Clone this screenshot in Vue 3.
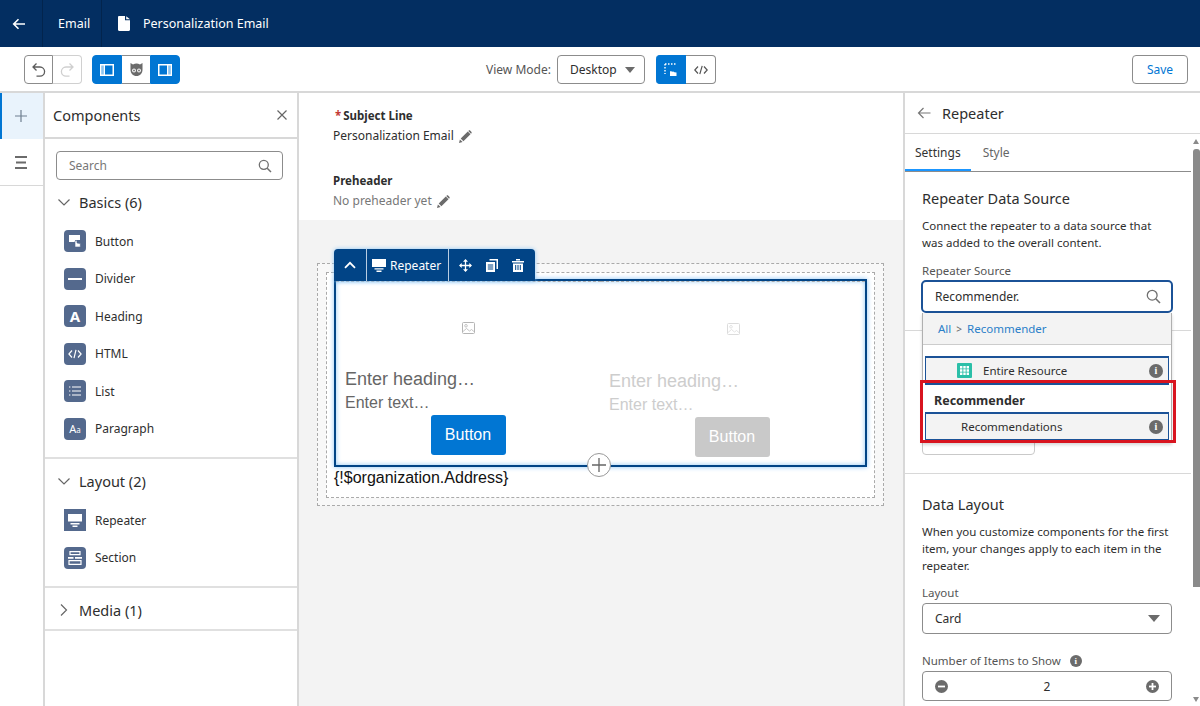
<script setup>
const basics = [
  { name: 'Button', kind: 'button' },
  { name: 'Divider', kind: 'divider' },
  { name: 'Heading', kind: 'heading' },
  { name: 'HTML', kind: 'html' },
  { name: 'List', kind: 'list' },
  { name: 'Paragraph', kind: 'paragraph' }
]
const layouts = [
  { name: 'Repeater', kind: 'repeater' },
  { name: 'Section', kind: 'section' }
]
const cells = [
  { id: 1, muted: false },
  { id: 2, muted: true }
]
</script>

<template>
  <div class="page">
    <header class="topbar">
      <div class="top-back">
        <svg width="16" height="16" viewBox="0 0 16 16"><path d="M14 8H3M7.5 3.2 2.7 8l4.8 4.8" fill="none" stroke="#fff" stroke-width="1.6"/></svg>
      </div>
      <div class="top-email">Email</div>
      <div class="top-title">
        <svg width="12" height="15" viewBox="0 0 12 15"><path d="M1.2 0H7v4.2h5v9.6c0 .7-.5 1.2-1.2 1.2H1.2C.5 15 0 14.5 0 13.8V1.2C0 .5.5 0 1.2 0ZM8.2.2 12 3.2H8.2Z" fill="#fff"/></svg>
        <span>Personalization Email</span>
      </div>
    </header>

    <div class="toolbar">
      <div class="btn-group undo">
        <button class="tool">
          <svg width="16" height="16" viewBox="0 0 16 16"><path d="M5.5 1.5 2 5l3.5 3.5M2.4 5H9a4.6 4.6 0 0 1 0 9.2H5.5" fill="none" stroke="#5c5c5c" stroke-width="1.3"/></svg>
        </button>
        <button class="tool off">
          <svg width="16" height="16" viewBox="0 0 16 16"><path d="M10.5 1.5 14 5l-3.5 3.5M13.6 5H7a4.6 4.6 0 0 0 0 9.2h3.5" fill="none" stroke="#cfcfcf" stroke-width="1.3"/></svg>
        </button>
      </div>
      <div class="btn-group panels">
        <button class="tool on">
          <svg width="14" height="12" viewBox="0 0 14 12"><path d="M0 0h14v12H0Z" fill="#fff"/><path d="M5 1.5h7.5v9H5Z" fill="#0176d3"/><path d="M1.2 1.5h2.6v9H1.2Z" fill="#8ec4ee"/></svg>
        </button>
        <button class="tool mid">
          <svg width="15" height="15" viewBox="0 0 15 15"><path d="M1.5 1 4 2.6a7 7 0 0 1 7 0L13.500 1v6.500C13.500 11.500 11 14 7.500 14S1.500 11.500 1.500 7.500Z" fill="#6b6b6b"/><circle cx="5" cy="8.500" r="1.900" fill="#fff"/><circle cx="10" cy="8.500" r="1.900" fill="#fff"/><circle cx="5" cy="8.500" r=".9" fill="#6b6b6b"/><circle cx="10" cy="8.500" r=".9" fill="#6b6b6b"/></svg>
        </button>
        <button class="tool on">
          <svg width="14" height="12" viewBox="0 0 14 12"><path d="M0 0h14v12H0Z" fill="#fff"/><path d="M1.500 1.500H9v9H1.500Z" fill="#0176d3"/><path d="M10.200 1.500h2.600v9h-2.600Z" fill="#8ec4ee"/></svg>
        </button>
      </div>
      <div class="view-mode">
        <span class="view-label">View Mode:</span>
        <div class="view-select">
          <span>Desktop</span>
          <i class="caret"></i>
        </div>
        <div class="btn-group editors">
          <button class="tool on">
            <svg width="14" height="14" viewBox="0 0 14 14"><path d="M1 1h12M1 1v10" fill="none" stroke="#fff" stroke-width="1.400" stroke-dasharray="1.500 1.500"/><path d="M6 13V8.500l1-.5 1 .8 1.200-.3 1.300.7 2 .3V13Z" fill="#fff"/></svg>
          </button>
          <button class="tool">
            <svg width="14" height="10" viewBox="0 0 14 10"><path d="M4 1.500.8 5 4 8.500M10 1.500 13.200 5 10 8.500M8.200.8 5.800 9.200" fill="none" stroke="#555" stroke-width="1.200"/></svg>
          </button>
        </div>
      </div>
      <button class="save">Save</button>
    </div>

    <main class="workspace">
      <nav class="rail">
        <div class="rail-item active">
          <svg width="14" height="14" viewBox="0 0 14 14"><path d="M7 1v12M1 7h12" stroke="#6f7f8f" stroke-width="1.200"/></svg>
        </div>
        <div class="rail-item">
          <svg width="12" height="13" viewBox="0 0 12 13"><path d="M0 1h12M1 6.500h10M0 12h12" stroke="#6b6b6b" stroke-width="2"/></svg>
        </div>
      </nav>

      <aside class="components">
        <div class="comp-head">
          <span>Components</span>
          <svg width="12" height="12" viewBox="0 0 12 12"><path d="M1.500 1.500l9 9M10.500 1.500l-9 9" stroke="#666" stroke-width="1.200"/></svg>
        </div>
        <div class="comp-search">
          <div class="search-box">
            <span>Search</span>
            <svg width="14" height="14" viewBox="0 0 14 14"><circle cx="5.800" cy="5.800" r="4.500" fill="none" stroke="#707070" stroke-width="1.300"/><path d="M9.200 9.200 13 13" stroke="#707070" stroke-width="1.500"/></svg>
          </div>
        </div>

        <section class="group basics">
          <div class="group-head">
            <svg width="14" height="14" viewBox="0 0 14 14"><path d="M1.500 4.500 7 10l5.500-5.500" fill="none" stroke="#666" stroke-width="1.200"/></svg>
            <span>Basics (6)</span>
          </div>
          <div v-for="item in basics" :key="item.name" class="comp-item">
            <div class="comp-icon">
              <svg v-if="item.kind === 'button'" width="14" height="14" viewBox="0 0 14 14"><path d="M1 1h11v5H7v2H1Z" fill="#fff"/><path d="M7 13V7.500c0-1.200 2-1.200 2 0V9l3.300.6V13Z" fill="#fff" stroke="#54698d" stroke-width=".6"/></svg>
              <svg v-else-if="item.kind === 'divider'" width="14" height="4" viewBox="0 0 14 4"><path d="M0 1h14v2H0Z" fill="#fff"/></svg>
              <span v-else-if="item.kind === 'heading'" class="glyph-a">A</span>
              <svg v-else-if="item.kind === 'html'" width="14" height="10" viewBox="0 0 14 10"><path d="M4 1.500.9 5 4 8.500M10 1.500 13.100 5 10 8.500M8 .8 6 9.200" fill="none" stroke="#fff" stroke-width="1.200"/></svg>
              <svg v-else-if="item.kind === 'list'" width="12" height="10" viewBox="0 0 12 10"><path d="M3 1h9M3 5h9M3 9h9M0 1h1.400M0 5h1.400M0 9h1.400" stroke="#fff" stroke-width="1"/></svg>
              <span v-else class="glyph-aa">A<small>a</small></span>
            </div>
            <span>{{ item.name }}</span>
          </div>
        </section>

        <section class="group layouts">
          <div class="group-head">
            <svg width="14" height="14" viewBox="0 0 14 14"><path d="M1.500 4.500 7 10l5.500-5.500" fill="none" stroke="#666" stroke-width="1.200"/></svg>
            <span>Layout (2)</span>
          </div>
          <div v-for="item in layouts" :key="item.name" class="comp-item">
            <div class="comp-icon" :class="{ square: item.kind === 'repeater' }">
              <svg v-if="item.kind === 'repeater'" width="14" height="13" viewBox="0 0 14 13"><path d="M0 0h14v7.500H0ZM2.500 9h9v1.500h-9ZM4.500 11.500h5V13h-5Z" fill="#fff"/></svg>
              <svg v-else width="14" height="14" viewBox="0 0 14 14"><path d="M2 .7h10v3H2Zm-1 9h12v3.600H1Z" fill="none" stroke="#fff" stroke-width="1.200"/><path d="M0 6h5.500v1.800H0ZM7 6h7v1.800H7Z" fill="#fff"/></svg>
            </div>
            <span>{{ item.name }}</span>
          </div>
        </section>

        <section class="group media">
          <div class="group-head">
            <svg width="14" height="14" viewBox="0 0 14 14"><path d="M4 1.500 9.500 7 4 12.500" fill="none" stroke="#666" stroke-width="1.200"/></svg>
            <span>Media (1)</span>
          </div>
        </section>
      </aside>

      <div class="editor">
        <div class="subject">
          <div class="field-label"><em>*</em>Subject Line</div>
          <div class="field-value">
            Personalization Email
            <svg width="13" height="13" viewBox="0 0 13 13"><path d="M0 13l.9-3.600 2.700 2.700ZM1.700 8.600 8.800 1.500l2.700 2.700-7.100 7.100ZM9.600.7c.5-.5 1.200-.5 1.700 0l1 1c.5.5.5 1.200 0 1.700l-.3.300-2.700-2.700Z" fill="#6b6b6b"/></svg>
          </div>
          <div class="field-label pre">Preheader</div>
          <div class="field-value empty">
            No preheader yet
            <svg width="13" height="13" viewBox="0 0 13 13"><path d="M0 13l.9-3.600 2.700 2.700ZM1.700 8.600 8.800 1.500l2.700 2.700-7.100 7.100ZM9.600.7c.5-.5 1.200-.5 1.700 0l1 1c.5.5.5 1.200 0 1.700l-.3.300-2.700-2.700Z" fill="#6b6b6b"/></svg>
          </div>
        </div>

        <div class="canvas">
          <div class="outer-dash">
            <div class="inner-dash">
              <div class="repeater">
                <div class="rep-bar">
                  <div class="rep-seg collapse">
                    <svg width="12" height="8" viewBox="0 0 12 8"><path d="M1 6.800 6 1.800l5 5" fill="none" stroke="#fff" stroke-width="1.800"/></svg>
                  </div>
                  <div class="rep-seg name">
                    <svg width="14" height="13" viewBox="0 0 14 13"><path d="M0 0h14v8H0ZM2.500 9.300h9v1.300h-9ZM4.500 11.500h5V13h-5Z" fill="#fff"/></svg>
                    <span>Repeater</span>
                  </div>
                  <div class="rep-seg actions">
                    <svg width="13" height="13" viewBox="0 0 13 13"><path d="M6.500 1v11M1 6.500h11" stroke="#fff" stroke-width="1.300"/><path d="M6.500 0 9 2.700H4ZM6.500 13 4 10.300h5ZM0 6.500 2.700 4v5ZM13 6.500 10.300 9V4Z" fill="#fff"/></svg>
                    <svg width="12" height="13" viewBox="0 0 12 13"><path d="M3.500 0H12v10h-1.500V1.500h-7Z" fill="#fff"/><path d="M0 3h9v10H0Z" fill="#fff"/><path d="M1.800 6h5.400M1.800 8h5.400M1.800 10h5.400" stroke="#014486"/></svg>
                    <svg width="12" height="13" viewBox="0 0 12 13"><path d="M0 2h12v1.500H0ZM4 0h4v1.500H4ZM1 4.500h10V13H1Z" fill="#fff"/><path d="M3.700 6v5M6 6v5M8.300 6v5" stroke="#014486"/></svg>
                  </div>
                </div>
                <div v-for="cell in cells" :key="cell.id" class="cell" :class="{ muted: cell.muted }">
                  <div class="cell-image">
                    <svg width="13" height="12" viewBox="0 0 13 12"><rect x=".5" y=".5" width="12" height="11" rx="1" fill="none" stroke="currentColor"/><circle cx="4" cy="3.800" r="1.300" fill="none" stroke="currentColor" stroke-width=".8"/><path d="M1 9.500 4.500 6.500l3 2.500 2-1.500L12.500 10" fill="none" stroke="currentColor" stroke-width=".8"/></svg>
                  </div>
                  <div class="cell-heading">Enter heading…</div>
                  <div class="cell-text">Enter text…</div>
                  <div class="cell-btn">Button</div>
                </div>
                <div class="add-circle">
                  <svg width="14" height="14" viewBox="0 0 14 14"><path d="M7 0v14M0 7h14" stroke="#666" stroke-width="1.300"/></svg>
                </div>
              </div>
              <div class="address">{!$organization.Address}</div>
            </div>
          </div>
        </div>
      </div>

      <aside class="props">
        <div class="props-head">
          <svg width="14" height="14" viewBox="0 0 14 14"><path d="M13.500 7H1.500M6.500 2 1.500 7l5 5" fill="none" stroke="#777" stroke-width="1.200"/></svg>
          <span>Repeater</span>
        </div>
        <div class="props-scroll">
          <div class="props-body">
            <div class="tabs">
              <span class="tab current">Settings</span>
              <span class="tab">Style</span>
            </div>

            <section class="prop-section source">
              <h3>Repeater Data Source</h3>
              <p>Connect the repeater to a data source that was added to the overall content.</p>
              <label>Repeater Source</label>
              <div class="source-field">
                <div class="source-input">
                  <span>Recommender.</span>
                  <svg width="15" height="15" viewBox="0 0 15 15"><circle cx="6.200" cy="6.200" r="4.900" fill="none" stroke="#707070" stroke-width="1.300"/><path d="M9.800 9.800 14 14" stroke="#707070" stroke-width="1.600"/></svg>
                </div>
                <div class="dropdown">
                  <div class="crumbs"><a>All</a><b>&gt;</b><a>Recommender</a></div>
                  <div class="option first">
                    <svg width="15" height="15" viewBox="0 0 15 15"><rect width="15" height="15" rx="1" fill="#2bbfa8"/><path d="M3 3h2.400v2.400H3ZM6.300 3h2.400v2.400H6.300ZM9.600 3H12v2.400H9.600ZM3 6.300h2.400v2.400H3ZM6.300 6.300h2.400v2.400H6.300ZM9.600 6.300H12v2.400H9.600ZM3 9.600h2.400V12H3ZM6.300 9.600h2.400V12H6.300ZM9.600 9.600H12V12H9.600Z" fill="#fff"/></svg>
                    <span>Entire Resource</span>
                    <i class="info">i</i>
                  </div>
                  <div class="option-title">Recommender</div>
                  <div class="option second">
                    <span>Recommendations</span>
                    <i class="info">i</i>
                  </div>
                  <div class="red-box"></div>
                </div>
              </div>
            </section>

            <section class="prop-section hidden-part">
              <div class="under-btn"></div>
            </section>

            <section class="prop-section data-layout">
              <h3>Data Layout</h3>
              <p>When you customize components for the first item, your changes apply to each item in the repeater.</p>
              <label>Layout</label>
              <div class="layout-select">
                <span>Card</span>
                <i class="caret large"></i>
              </div>
              <label class="items-label">Number of Items to Show <i class="info small">i</i></label>
              <div class="stepper">
                <svg width="13" height="13" viewBox="0 0 13 13"><circle cx="6.500" cy="6.500" r="6.500" fill="#6b6b6b"/><path d="M3 5.600h7v1.800H3Z" fill="#fff"/></svg>
                <span>2</span>
                <svg width="13" height="13" viewBox="0 0 13 13"><circle cx="6.500" cy="6.500" r="6.500" fill="#6b6b6b"/><path d="M3 5.600h7v1.800H3Z" fill="#fff"/><path d="M5.600 3h1.800v7H5.600Z" fill="#fff"/></svg>
              </div>
            </section>
          </div>
          <div class="scrollbar">
            <i class="arrow up"></i>
            <div class="thumb"></div>
            <i class="arrow down"></i>
          </div>
        </div>
      </aside>
    </main>
  </div>
</template>

<style>
html, body { margin: 0; background: #fff; }
</style>

<style scoped>
.page {
  width: 1200px;
  height: 706px;
  overflow: hidden;
  display: flex;
  flex-direction: column;
  font-family: "Noto Sans", "Open Sans", sans-serif;
  font-size: 12px;
  color: #2e2e2e;
  background: #fff;
}

/* top bar */
.topbar {
  flex: none;
  height: 47px;
  display: flex;
  background: #032e61;
  color: #fff;
  font-size: 12.5px;
}
.top-back, .top-email, .top-title {
  display: flex;
  align-items: center;
  border-right: 1px solid #02244d;
}
.top-back { width: 43px; justify-content: center; padding-right: 4px; box-sizing: border-box; }
.top-email { width: 59px; padding-left: 15px; box-sizing: border-box; }
.top-title { border-right: 0; padding-left: 16px; gap: 13px; }

/* toolbar */
.toolbar {
  flex: none;
  height: 46px;
  box-sizing: border-box;
  display: flex;
  align-items: flex-start;
  padding: 8px 12px 0 24px;
  border-bottom: 2px solid #d8d8d8;
}
.btn-group { display: flex; height: 29px; }
.tool {
  padding: 0;
  height: 29px;
  display: flex;
  align-items: center;
  justify-content: center;
  background: #fff;
  border: 1px solid #8c8c8c;
  box-sizing: border-box;
}
.undo .tool { width: 29px; }
.undo .tool:first-child { border-radius: 4px 0 0 4px; }
.undo .tool.off { border-color: #d0d0d0; border-left: 0; border-radius: 0 4px 4px 0; }
.panels { margin-left: 10px; }
.panels .tool { width: 30px; }
.tool.on { background: #0176d3; border-color: #0176d3; }
.panels .tool:first-child { border-radius: 4px 0 0 4px; }
.panels .tool:last-child { border-radius: 0 4px 4px 0; }
.tool.mid { width: 28px; border-left: 0; border-right: 0; }
.view-mode { display: flex; align-items: center; height: 29px; margin-left: 306px; }
.view-label { color: #555; width: 71px; }
.view-select {
  width: 88px;
  height: 29px;
  box-sizing: border-box;
  border: 1px solid #8c8c8c;
  border-radius: 4px;
  display: flex;
  align-items: center;
  justify-content: space-between;
  padding: 0 9px 0 12px;
}
.caret {
  width: 0;
  height: 0;
  border-left: 5px solid transparent;
  border-right: 5px solid transparent;
  border-top: 6px solid #6b6b6b;
}
.caret.large { border-left-width: 6px; border-right-width: 6px; border-top-width: 7px; }
.editors { margin-left: 11px; }
.editors .tool { width: 30px; border-radius: 0 4px 4px 0; border-left: 0; }
.editors .tool.on { border-radius: 4px 0 0 4px; }
.save {
  margin-left: auto;
  width: 56px;
  height: 29px;
  background: #fff;
  border: 1px solid #8c8c8c;
  border-radius: 4px;
  color: #0176d3;
  font: inherit;
  padding: 0;
}

/* main row */
.workspace { flex: 1; display: flex; min-height: 0; }
.rail { flex: none; width: 45px; box-sizing: border-box; border-right: 2px solid #d8d8d8; }
.rail-item {
  height: 47px;
  display: flex;
  align-items: center;
  justify-content: center;
  box-sizing: border-box;
  border-bottom: 1px solid #d8d8d8;
  padding-right: 2px;
}
.rail-item.active { background: #e9f3fc; border-left: 2px solid #0176d3; border-bottom: 0; height: 46px; padding-right: 4px; }

.components { flex: none; width: 254px; box-sizing: border-box; border-right: 2px solid #d8d8d8; }
.comp-head {
  height: 46px;
  box-sizing: border-box;
  padding: 0 9px 0 8px;
  display: flex;
  align-items: center;
  justify-content: space-between;
  border-bottom: 2px solid #d8d8d8;
  font-size: 14.5px;
}
.comp-search { padding: 12px 14px 0 11px; }
.search-box {
  height: 29px;
  box-sizing: border-box;
  border: 1px solid #8c8c8c;
  border-radius: 4px;
  display: flex;
  align-items: center;
  justify-content: space-between;
  padding: 0 10px 0 12px;
  color: #777;
}
.group { box-sizing: border-box; border-bottom: 2px solid #e0e0e0; padding-left: 19px; }
.group-head {
  display: flex;
  align-items: center;
  gap: 8px;
  height: 22px;
  font-size: 14.500px;
  margin-left: -7px;
}
.basics { height: 279px; padding-top: 11px; }
.layouts { height: 129px; padding-top: 11px; }
.media { height: 43px; padding-top: 11px; }
.group-head + .comp-item { margin-top: 17px; }
.layouts .group-head + .comp-item { margin-top: 17px; }
.comp-item {
  display: flex;
  align-items: center;
  gap: 9px;
  height: 22px;
  margin-bottom: 15.600px;
}
.comp-icon {
  width: 22px;
  height: 22px;
  background: #54698d;
  border-radius: 4px;
  display: flex;
  align-items: center;
  justify-content: center;
  color: #fff;
}
.comp-icon.square { border-radius: 0; }
.glyph-a { font-size: 15px; font-weight: 700; line-height: 1; }
.glyph-aa { font-size: 11px; line-height: 1; }
.glyph-aa small { font-size: 8px; }

/* editor */
.editor { flex: 1; display: flex; flex-direction: column; min-width: 0; }
.subject { height: 127px; box-sizing: border-box; padding: 14px 0 0 34px; }
.field-label { font-weight: 700; font-size: 11.500px; line-height: 18px; }
.field-label em { color: #c23934; font-style: normal; margin: 0 2px 0 2px; }
.field-label.pre { margin-top: 26px; }
.field-value { display: flex; align-items: center; gap: 5px; line-height: 20px; margin-top: 1px; }
.field-value.empty { color: #777; }
.canvas { flex: 1; background: #f3f3f3; padding: 43px 19px 0 18px; }
.outer-dash {
  height: 243px;
  box-sizing: border-box;
  border: 1px dashed #aaa;
  padding: 8px;
  background: #f8f8f8;
}
.inner-dash {
  height: 226px;
  box-sizing: border-box;
  border: 1px dashed #aaa;
  background: #fff;
  padding: 6px 7px 0 7px;
}
.repeater {
  position: relative;
  height: 188px;
  box-sizing: border-box;
  display: flex;
  border: 2px solid #014486;
  box-shadow: 0 0 5px #8cc5f5, inset 0 0 5px #8cc5f5;
}
.rep-bar {
  position: absolute;
  left: -2px;
  top: -32px;
  height: 32px;
  width: 201px;
  display: flex;
  background: #014486;
  border-radius: 4px 4px 0 0;
  box-shadow: 0 0 4px #8cc5f5;
  color: #fff;
}
.rep-seg { display: flex; align-items: center; border-right: 1px solid #b8cde2; box-sizing: border-box; }
.rep-seg.collapse { width: 33px; justify-content: center; }
.rep-seg.name { width: 82px; padding-left: 5px; gap: 4px; }
.rep-seg.actions { border-right: 0; padding-left: 10px; gap: 14px; }
.cell { flex: 1; box-sizing: border-box; padding: 0 0 0 9px; border-top: 1px dashed #aaa; font-family: "Liberation Sans", Arial, sans-serif; }
.cell:first-of-type { border-right: 1px dashed #888; border-left: 1px dashed #aaa; }
.cell-image { height: 46px; margin-top: 40px; display: flex; justify-content: center; color: #b5b5b5; height: 12px; padding-right: 9px; }
.cell-heading { margin-top: 34px; font-size: 18px; line-height: 22px; color: #666; }
.cell-text { font-size: 16px; line-height: 20px; margin-top: 3px; color: #666; }
.cell-btn {
  width: 75px;
  height: 40px;
  margin: 2px auto 0;
  position: relative;
  left: -5px;
  border-radius: 3px;
  background: #0176d3;
  color: #fff;
  font-size: 16px;
  display: flex;
  align-items: center;
  justify-content: center;
}
.cell.muted { padding-left: 8px; }
.cell.muted .cell-image { color: #dcdcdc; padding-right: 8px; margin-top: 41px; }
.cell.muted .cell-heading,
.cell.muted .cell-text { color: #cdcdcd; }
.cell.muted .cell-heading { margin-top: 35px; }
.cell.muted .cell-btn { background: #c9c9c9; }
.add-circle {
  position: absolute;
  left: 251px;
  bottom: -12px;
  width: 22px;
  height: 22px;
  border-radius: 50%;
  border: 1px solid #999;
  background: #fff;
  display: flex;
  align-items: center;
  justify-content: center;
}
.address { font-family: "Liberation Sans", Arial, sans-serif; font-size: 16px; line-height: 20px; color: #111; margin-top: 1px; }

/* right panel */
.props { flex: none; width: 297px; box-sizing: border-box; border-left: 2px solid #d8d8d8; display: flex; flex-direction: column; min-height: 0; }
.props-head {
  flex: none;
  height: 41px;
  box-sizing: border-box;
  border-bottom: 1px solid #d8d8d8;
  display: flex;
  align-items: center;
  gap: 11px;
  padding-left: 12px;
  font-size: 14.500px;
}
.props-scroll { flex: 1; display: flex; min-height: 0; }
.props-body { flex: 1; min-width: 0; }
.tabs {
  height: 38px;
  box-sizing: border-box;
  display: flex;
  gap: 22px;
  padding: 0 0 0 10px;
  margin-right: 2px;
  border-bottom: 1px solid #8c8c8c;
  align-items: center;
  position: relative;
}
.tab { color: #666; }
.tab.current { color: #333; position: relative; }
.tab.current::after {
  content: "";
  position: absolute;
  left: -10px;
  width: 66px;
  top: 25px;
  height: 2px;
  background: #1b96ff;
}
.prop-section { box-sizing: border-box; border-bottom: 1px solid #d8d8d8; padding: 0 17px; margin-right: 2px; }
.source { height: 159px; padding-top: 15px; position: relative; z-index: 2; }
h3 { margin: 0; font-size: 14.500px; font-weight: 400; line-height: 22px; }
p { margin: 8px 0 0; font-size: 11.500px; line-height: 17px; }
label { display: block; font-size: 11.500px; line-height: 16px; color: #555; margin-top: 12px; }
.source-field { position: relative; margin-top: 1px; }
.source-input {
  width: 252px;
  height: 33px;
  margin-left: -1px;
  box-sizing: border-box;
  border: 2px solid #1b5297;
  border-radius: 5px;
  display: flex;
  align-items: center;
  justify-content: space-between;
  padding: 0 10px 0 12px;
  background: #fff;
}
.dropdown {
  position: absolute;
  left: 0;
  top: 33px;
  width: 250px;
  height: 130px;
  box-sizing: border-box;
  border: 1px solid #b0b0b0;
  border-top: 0;
  background: #fff;
  box-shadow: 0 2px 3px rgba(0,0,0,.16);
}
.crumbs {
  height: 32px;
  box-sizing: border-box;
  background: #f3f3f3;
  border-bottom: 1px solid #ccc;
  display: flex;
  align-items: center;
  gap: 5px;
  padding-left: 15px;
  font-size: 11.500px;
}
.crumbs a { color: #2a7fc9; }
.crumbs b { font-weight: 400; font-size: 10px; color: #666; }
.option {
  width: 244px;
  height: 29px;
  margin-left: 2px;
  box-sizing: border-box;
  border: 1px solid #1b5297;
  border-width: 2px 1px;
  background: #f3f3f3;
  display: flex;
  align-items: center;
  font-size: 11.500px;
  position: relative;
}
.option.first { margin-top: 11px; padding-left: 31px; gap: 11px; }
.option.second { padding-left: 35px; }
.option .info { position: absolute; right: 5px; top: 6px; }
.option-title { font-weight: 700; font-size: 12.500px; height: 27px; line-height: 31px; padding-left: 11px; }
.info {
  width: 14px;
  height: 14px;
  border-radius: 50%;
  background: #6b6b6b;
  color: #fff;
  font: 700 10px/14px "Liberation Serif", serif;
  text-align: center;
  display: inline-block;
}
.info.small { width: 12px; height: 12px; line-height: 12px; font-size: 9px; margin-left: 6px; vertical-align: 1px; }
.red-box {
  position: absolute;
  left: -3px;
  top: 67px;
  width: 256px;
  height: 63px;
  box-sizing: border-box;
  border: 3px solid #d8141f;
}
.hidden-part { height: 143px; position: relative; }
.under-btn {
  position: absolute;
  left: 17px;
  bottom: 18px;
  width: 113px;
  height: 30px;
  box-sizing: border-box;
  border: 1px solid #c9c9c9;
  border-radius: 4px;
}
.data-layout { border: 0; padding-top: 19px; }
.data-layout p { margin-top: 8px; }
.data-layout label { margin-top: 11px; }
.layout-select, .stepper {
  width: 250px;
  height: 31px;
  box-sizing: border-box;
  border: 1px solid #8c8c8c;
  border-radius: 4px;
  margin-top: 2px;
  display: flex;
  align-items: center;
  justify-content: space-between;
  padding: 0 12px;
}
.layout-select { padding-right: 11px; }
.data-layout .items-label { margin-top: 19px; }
.stepper { height: 30px; }
.scrollbar {
  flex: none;
  width: 7px;
  position: relative;
  display: flex;
  flex-direction: column;
  align-items: center;
}
.thumb { position: absolute; top: 15px; left: 0; width: 7px; height: 438px; background: #8a8a8a; border-radius: 3px 3px 0 0; }
.arrow { position: absolute; left: 0; width: 0; height: 0; border-left: 3.500px solid transparent; border-right: 3.500px solid transparent; }
.arrow.up { top: 5px; border-bottom: 5px solid #8a8a8a; }
.arrow.down { top: 563px; border-top: 5px solid #8a8a8a; }
</style>
